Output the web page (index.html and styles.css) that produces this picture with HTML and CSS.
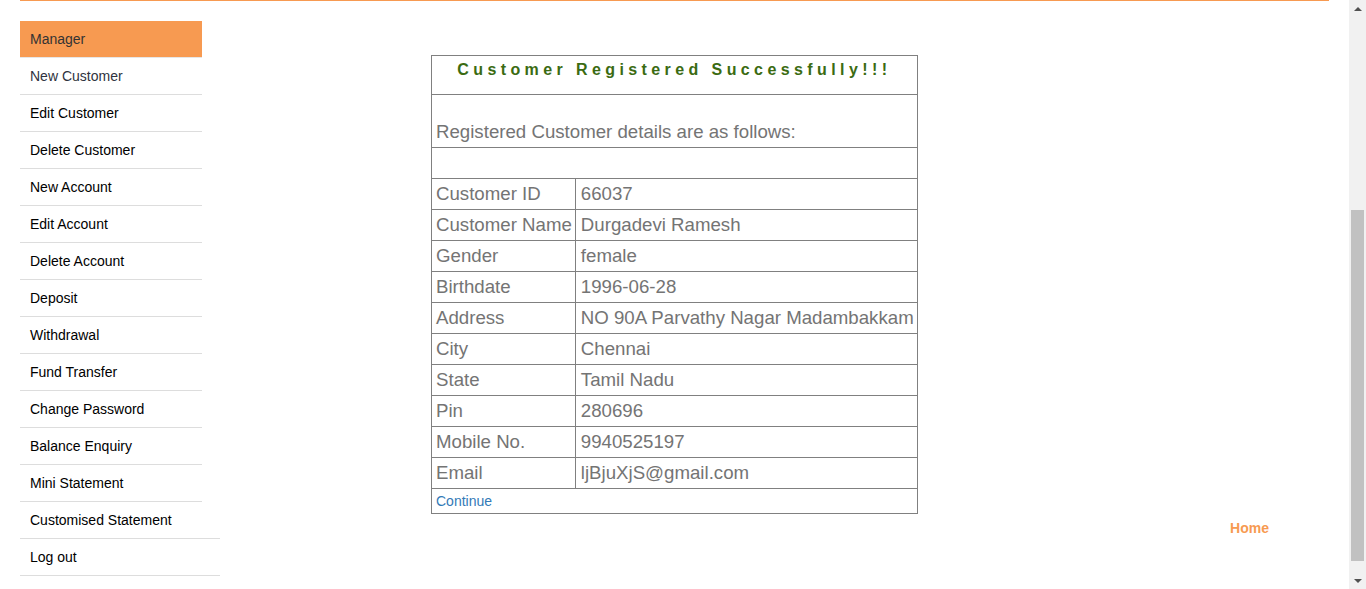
FILE: index.html
```html
<!DOCTYPE html>
<html>
<head>
<meta charset="utf-8">
<title>Guru99 Bank Manager</title>
<link rel="stylesheet" href="styles.css">
</head>
<body>
<div class="page">
  <div class="topline"></div>
  <div class="content">
    <ul class="menu">
      <li class="menu-head">Manager</li>
      <li class="item first"><a href="#">New Customer</a></li>
      <li class="item"><a href="#">Edit Customer</a></li>
      <li class="item"><a href="#">Delete Customer</a></li>
      <li class="item"><a href="#">New Account</a></li>
      <li class="item"><a href="#">Edit Account</a></li>
      <li class="item"><a href="#">Delete Account</a></li>
      <li class="item"><a href="#">Deposit</a></li>
      <li class="item"><a href="#">Withdrawal</a></li>
      <li class="item"><a href="#">Fund Transfer</a></li>
      <li class="item"><a href="#">Change Password</a></li>
      <li class="item"><a href="#">Balance Enquiry</a></li>
      <li class="item"><a href="#">Mini Statement</a></li>
      <li class="item wide"><a href="#">Customised Statement</a></li>
      <li class="item wide"><a href="#">Log out</a></li>
    </ul>
    <div class="main">
      <table class="details">
        <tr><td colspan="2" class="heading">Customer Registered Successfully!!!</td></tr>
        <tr><td colspan="2" class="intro">Registered Customer details are as follows:</td></tr>
        <tr><td colspan="2" class="blank"></td></tr>
        <tr><td class="label">Customer ID</td><td class="value">66037</td></tr>
        <tr><td class="label">Customer Name</td><td class="value">Durgadevi Ramesh</td></tr>
        <tr><td class="label">Gender</td><td class="value">female</td></tr>
        <tr><td class="label">Birthdate</td><td class="value">1996-06-28</td></tr>
        <tr><td class="label">Address</td><td class="value">NO 90A Parvathy Nagar Madambakkam</td></tr>
        <tr><td class="label">City</td><td class="value">Chennai</td></tr>
        <tr><td class="label">State</td><td class="value">Tamil Nadu</td></tr>
        <tr><td class="label">Pin</td><td class="value">280696</td></tr>
        <tr><td class="label">Mobile No.</td><td class="value">9940525197</td></tr>
        <tr><td class="label">Email</td><td class="value">ljBjuXjS@gmail.com</td></tr>
        <tr><td colspan="2" class="continue"><a href="#">Continue</a></td></tr>
      </table>
      <div class="home-row"><a href="#" class="home">Home</a></div>
    </div>
  </div>
</div>
<div class="scrollbar">
  <div class="arrow up"></div>
  <div class="track"><div class="thumb"></div></div>
  <div class="arrow down"></div>
</div>
</body>
</html>
```
FILE: styles.css
```css
html, body {
  margin: 0;
  padding: 0;
  height: 589px;
  overflow: hidden;
}
body {
  display: flex;
  font-family: "Liberation Sans", Arial, sans-serif;
  background: #fff;
}
.page {
  flex: 1;
  padding: 0 20px;
  height: 589px;
  overflow: hidden;
}
.topline {
  height: 1px;
  background: #f79a51;
}
.content {
  display: flex;
  padding-top: 20px;
}
.menu {
  list-style: none;
  margin: 0;
  padding: 0;
  width: 200px;
  flex: none;
}
.menu-head {
  width: 172px;
  height: 36px;
  line-height: 36px;
  padding-left: 10px;
  background: #f79a51;
  color: #333;
  font-size: 14px;
  border-bottom: 1px solid #e6e6e6;
}
.item {
  width: 182px;
  height: 36px;
  border-bottom: 1px solid #ddd;
  display: flex;
  align-items: center;
}
.item.wide {
  width: 200px;
}
.item a {
  padding-left: 10px;
  font-size: 14px;
  color: #000;
  text-decoration: none;
}
.item.first a {
  color: #2f3340;
}
.main {
  flex: 1;
  padding-left: 211px;
  padding-top: 34px;
}
.details {
  border-collapse: collapse;
  width: 486px;
  color: #747474;
  font-size: 14pt;
}
.details td {
  border: 1px solid #808080;
  padding: 0 4px;
  height: 30px;
  white-space: nowrap;
}
.details td.label {
  width: 135px;
  padding-right: 3px;
}
.details td.value {
  padding-left: 5px;
  padding-right: 3px;
}
.details td.heading {
  height: 39px;
  vertical-align: top;
  padding-top: 5px;
  box-sizing: border-box;
  text-align: center;
  color: #3b6b12;
  font-weight: bold;
  font-size: 16px;
  letter-spacing: 4.4px;
}
.details td.intro {
  height: 48px;
  vertical-align: bottom;
  padding-bottom: 4px;
}
.details td.blank {
  height: 30px;
  padding: 0;
}
.details td.continue {
  height: 24px;
  font-size: 14px;
}
.continue a {
  color: #337ab7;
  text-decoration: none;
}
.home-row {
  display: flex;
  justify-content: flex-end;
  padding-right: 60px;
  margin-top: 6px;
}
.home {
  color: #f79a51;
  font-weight: bold;
  font-size: 14px;
  text-decoration: none;
}
.scrollbar {
  width: 17px;
  flex: none;
  height: 589px;
  background: #f1f1f1;
  display: flex;
  flex-direction: column;
}
.arrow {
  height: 17px;
  display: flex;
  align-items: center;
  justify-content: center;
}
.arrow.up::before {
  content: "";
  border-left: 4px solid transparent;
  border-right: 4px solid transparent;
  border-bottom: 4px solid #505050;
}
.arrow.down::before {
  content: "";
  border-left: 4px solid transparent;
  border-right: 4px solid transparent;
  border-top: 4px solid #505050;
}
.track {
  flex: 1;
  padding: 193px 2px 0 2px;
}
.thumb {
  height: 351px;
  background: #c1c1c1;
}
```
